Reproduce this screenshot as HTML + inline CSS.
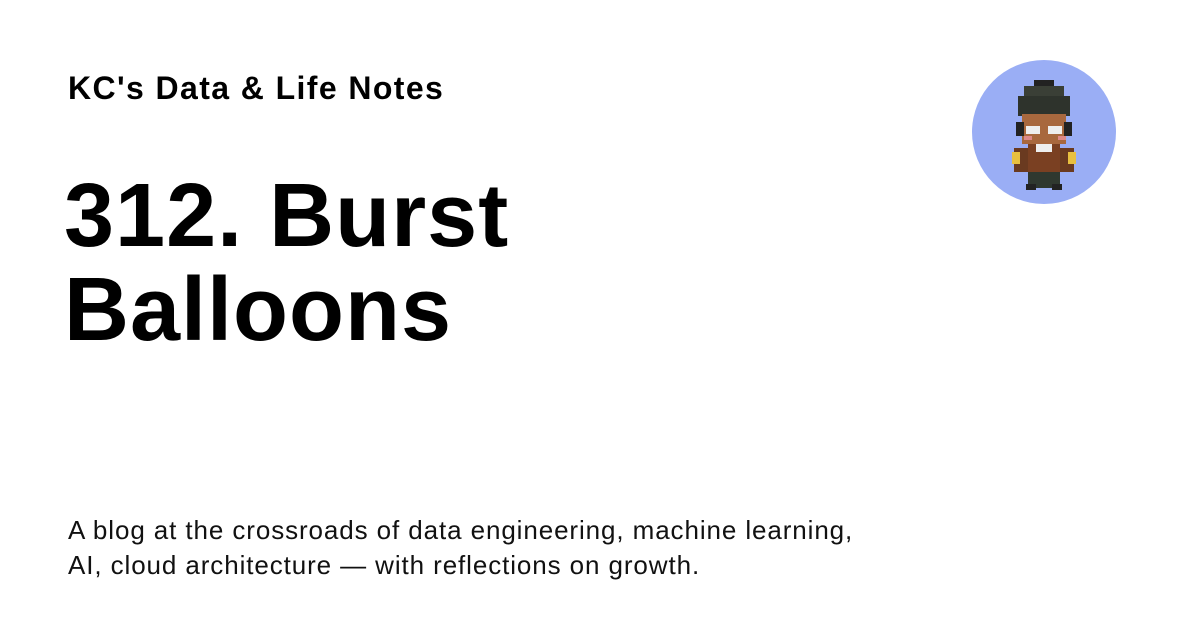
<!DOCTYPE html>
<html><head><style>
body{margin:0;width:1200px;height:630px;background:#fff;position:relative;overflow:hidden;font-family:"Liberation Sans",sans-serif;color:#000}
.h{position:absolute;left:68px;top:70px;font-size:32px;font-weight:bold;letter-spacing:1.4px}
.t{position:absolute;left:64px;top:169px;font-size:90px;font-weight:bold;line-height:94px;letter-spacing:1px}
.d{position:absolute;left:68px;top:513px;font-size:26px;line-height:35px;color:#111;letter-spacing:0.9px}
.c{position:absolute;left:972px;top:60px;width:144px;height:144px;border-radius:50%;background:#9aaef5}
svg{position:absolute;left:972px;top:60px}
</style></head><body>
<div class="h">KC's Data &amp; Life Notes</div>
<div class="t">312. Burst<br>Balloons</div>
<div class="d">A blog at the crossroads of data engineering, machine learning,<br>AI, cloud architecture — with reflections on growth.</div>
<div class="c"></div>
<svg width="144" height="144" viewBox="0 0 144 144" shape-rendering="crispEdges">
<rect x="62" y="20" width="20" height="6" fill="#222"/>
<rect x="52" y="26" width="40" height="30" fill="#3a3f36"/>
<rect x="46" y="36" width="52" height="20" fill="#2e332c"/>
<rect x="50" y="54" width="44" height="30" fill="#a8683e"/>
<rect x="44" y="62" width="8" height="14" fill="#222"/>
<rect x="92" y="62" width="8" height="14" fill="#222"/>
<rect x="54" y="66" width="14" height="8" fill="#eee"/>
<rect x="76" y="66" width="14" height="8" fill="#eee"/>
<rect x="52" y="76" width="8" height="4" fill="#d88"/>
<rect x="86" y="76" width="8" height="4" fill="#d88"/>
<rect x="56" y="84" width="32" height="30" fill="#7a4022"/>
<rect x="64" y="84" width="16" height="8" fill="#eee"/>
<rect x="42" y="88" width="14" height="24" fill="#6a3a20"/>
<rect x="88" y="88" width="14" height="24" fill="#6a3a20"/>
<rect x="40" y="92" width="8" height="12" fill="#e8c040"/>
<rect x="96" y="92" width="8" height="12" fill="#e8c040"/>
<rect x="56" y="112" width="32" height="16" fill="#2f382f"/>
<rect x="54" y="124" width="10" height="6" fill="#222"/>
<rect x="80" y="124" width="10" height="6" fill="#222"/>
</svg>
</body></html>
